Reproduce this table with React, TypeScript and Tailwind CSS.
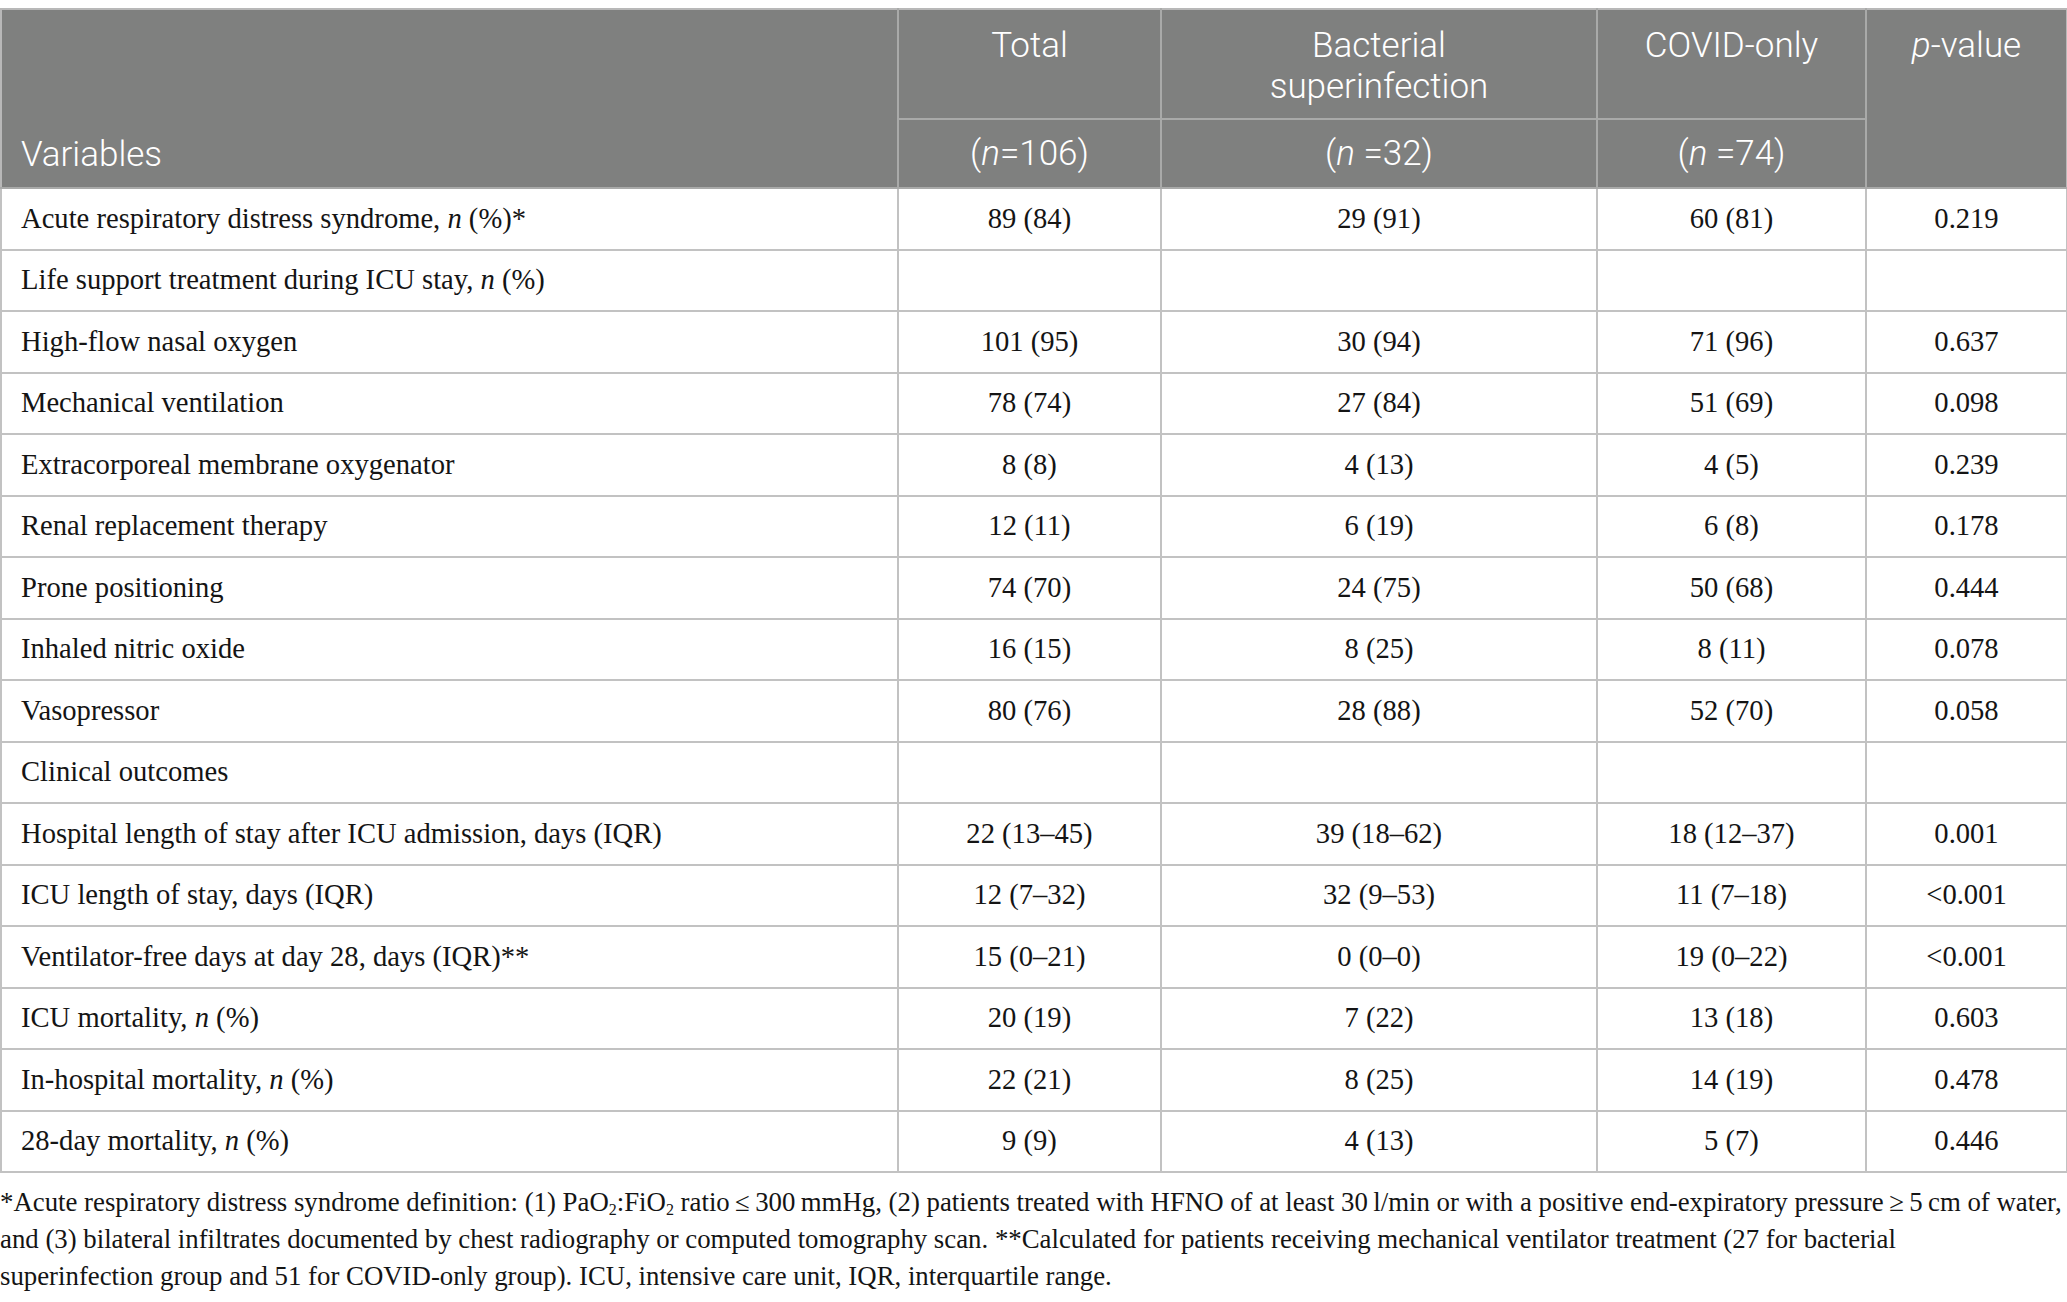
import React from "react";

type Row = { label: React.ReactNode; vals: string[] };

const N = () => <i>n</i>;

const rows: Row[] = [
  { label: <>Acute respiratory distress syndrome, <N /> (%)*</>, vals: ["89 (84)", "29 (91)", "60 (81)", "0.219"] },
  { label: <>Life support treatment during ICU stay, <N /> (%)</>, vals: ["", "", "", ""] },
  { label: <>High-flow nasal oxygen</>, vals: ["101 (95)", "30 (94)", "71 (96)", "0.637"] },
  { label: <>Mechanical ventilation</>, vals: ["78 (74)", "27 (84)", "51 (69)", "0.098"] },
  { label: <>Extracorporeal membrane oxygenator</>, vals: ["8 (8)", "4 (13)", "4 (5)", "0.239"] },
  { label: <>Renal replacement therapy</>, vals: ["12 (11)", "6 (19)", "6 (8)", "0.178"] },
  { label: <>Prone positioning</>, vals: ["74 (70)", "24 (75)", "50 (68)", "0.444"] },
  { label: <>Inhaled nitric oxide</>, vals: ["16 (15)", "8 (25)", "8 (11)", "0.078"] },
  { label: <>Vasopressor</>, vals: ["80 (76)", "28 (88)", "52 (70)", "0.058"] },
  { label: <>Clinical outcomes</>, vals: ["", "", "", ""] },
  { label: <>Hospital length of stay after ICU admission, days (IQR)</>, vals: ["22 (13–45)", "39 (18–62)", "18 (12–37)", "0.001"] },
  { label: <>ICU length of stay, days (IQR)</>, vals: ["12 (7–32)", "32 (9–53)", "11 (7–18)", "<0.001"] },
  { label: <>Ventilator-free days at day 28, days (IQR)**</>, vals: ["15 (0–21)", "0 (0–0)", "19 (0–22)", "<0.001"] },
  { label: <>ICU mortality, <N /> (%)</>, vals: ["20 (19)", "7 (22)", "13 (18)", "0.603"] },
  { label: <>In-hospital mortality, <N /> (%)</>, vals: ["22 (21)", "8 (25)", "14 (19)", "0.478"] },
  { label: <>28-day mortality, <N /> (%)</>, vals: ["9 (9)", "4 (13)", "5 (7)", "0.446"] },
];

const serif = "font-['Liberation_Serif','Times_New_Roman',serif]";
const sans = "font-['Roboto','Open_Sans',sans-serif]";

export default function App() {
  return (
    <div className="w-[2067px] min-h-[1302px] bg-white pt-[8px]">
      <table className="table-fixed border-collapse w-[2066px]">
        <colgroup>
          <col className="w-[897px]" />
          <col className="w-[263px]" />
          <col className="w-[436px]" />
          <col className="w-[269px]" />
          <col className="w-[201px]" />
        </colgroup>
        <thead className={`${sans} text-white text-[35px] leading-[41px] bg-[#7f807f]`}>
          <tr className="h-[110px]">
            <th rowSpan={2} className="border-2 border-[#a9aaa9] border-t-[#b8b8b8] border-l-[#b8b8b8] text-left font-light align-bottom pl-[19px] pb-[12px]">
              Variables
            </th>
            <th className="border-2 border-[#a9aaa9] border-t-[#b8b8b8] font-light align-top pt-[15px]">Total</th>
            <th className="border-2 border-[#a9aaa9] border-t-[#b8b8b8] font-light align-top pt-[15px]">
              <div>Bacterial</div>
              <div>superinfection</div>
            </th>
            <th className="border-2 border-[#a9aaa9] border-t-[#b8b8b8] font-light align-top pt-[15px]">COVID-only</th>
            <th rowSpan={2} className="border-2 border-[#a9aaa9] border-t-[#b8b8b8] border-r-[#b8b8b8] font-light align-top pt-[15px]">
              <i>p</i>-value
            </th>
          </tr>
          <tr className="h-[69px]">
            <th className="border-2 border-[#a9aaa9] font-light align-middle">
              (<i>n</i>=106)
            </th>
            <th className="border-2 border-[#a9aaa9] font-light align-middle">
              (<i>n</i> =32)
            </th>
            <th className="border-2 border-[#a9aaa9] font-light align-middle">
              (<i>n</i> =74)
            </th>
          </tr>
        </thead>
        <tbody className={`${serif} text-[#141414] text-[28.6px] leading-[34px]`}>
          {rows.map((r, i) => (
            <tr key={i} className="h-[61.5px]">
              <td className="border-2 border-[#c2c2c2] pl-[19px] align-middle">{r.label}</td>
              {r.vals.map((v, j) => (
                <td key={j} className="border-2 border-[#c2c2c2] text-center align-middle">
                  {v}
                </td>
              ))}
            </tr>
          ))}
        </tbody>
      </table>
      <div className={`${serif} text-[#141414] text-[26.8px] leading-[37px] pt-[11px] whitespace-nowrap`}>
        <div>
          *Acute respiratory distress syndrome definition: (1) PaO<sub className="text-[16px]">2</sub>:FiO
          <sub className="text-[16px]">2</sub> ratio{"\u2009"}≤{"\u2009"}300{"\u2009"}mmHg, (2) patients treated with HFNO of at
          least 30{"\u2009"}l/min or with a positive end-expiratory pressure{"\u2009"}≥{"\u2009"}5{"\u2009"}cm of water,
        </div>
        <div>
          and (3) bilateral infiltrates documented by chest radiography or computed tomography scan. **Calculated for
          patients receiving mechanical ventilator treatment (27 for bacterial
        </div>
        <div>superinfection group and 51 for COVID-only group). ICU, intensive care unit, IQR, interquartile range.</div>
      </div>
    </div>
  );
}
